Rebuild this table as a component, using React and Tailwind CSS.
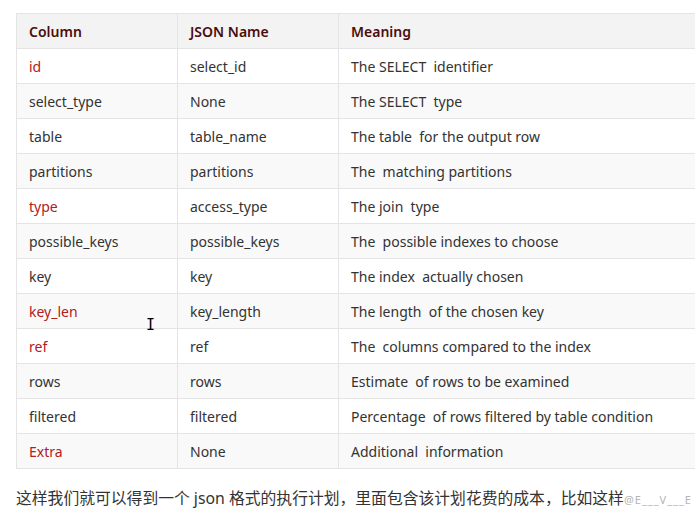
const rows = [
  ["id", "select_id", "The SELECT  identifier", true],
  ["select_type", "None", "The SELECT  type", false],
  ["table", "table_name", "The table  for the output row", false],
  ["partitions", "partitions", "The  matching partitions", false],
  ["type", "access_type", "The join  type", true],
  ["possible_keys", "possible_keys", "The  possible indexes to choose", false],
  ["key", "key", "The index  actually chosen", false],
  ["key_len", "key_length", "The length  of the chosen key", true],
  ["ref", "ref", "The  columns compared to the index", true],
  ["rows", "rows", "Estimate  of rows to be examined", false],
  ["filtered", "filtered", "Percentage  of rows filtered by table condition", false],
  ["Extra", "None", "Additional  information", true],
];

function App() {
  return (
    <div
      className="relative w-[695px] h-[516px] overflow-hidden bg-white"
      style={{ fontFamily: '"Noto Sans", "Noto Sans CJK SC", sans-serif' }}
    >
      <div className="pt-[13px] pl-4">
        <table className="w-[720px] border-collapse text-[14px] text-[#333] whitespace-pre">
          <thead>
            <tr className="bg-[#f3f3f3] h-[35px]">
              <th className="w-[161px] border border-[#e4e4e4] px-3 text-left font-semibold text-[#4a0d0d]">Column</th>
              <th className="w-[161px] border border-[#e4e4e4] px-3 text-left font-semibold text-[#4a0d0d]">JSON Name</th>
              <th className="border border-[#e4e4e4] px-3 text-left font-semibold text-[#4a0d0d]">Meaning</th>
            </tr>
          </thead>
          <tbody>
            {rows.map((r, i) => (
              <tr key={r[0]} className={`h-[35px] ${i % 2 ? "bg-[#f9f9f9]" : "bg-white"}`}>
                <td className={`border border-[#e4e4e4] px-3 ${r[3] ? "text-[#b0201c]" : ""}`}>{r[0]}</td>
                <td className="border border-[#e4e4e4] px-3">{r[1]}</td>
                <td className="border border-[#e4e4e4] px-3">{r[2]}</td>
              </tr>
            ))}
          </tbody>
        </table>
      </div>
      <p className="mt-[18px] pl-4 text-[15.8px] text-[#333] whitespace-nowrap">
        这样我们就可以得到一个 json 格式的执行计划，里面包含该计划花费的成本，比如这样
        <span className="text-[11px] text-[#b5b5b5] tracking-[1px]">@E___V___E</span>
      </p>
      <span className="absolute left-[146px] top-[318px] text-[15px] leading-none text-black" style={{ fontFamily: '"DejaVu Sans Mono", monospace' }}>I</span>
    </div>
  );
}

export default App;
